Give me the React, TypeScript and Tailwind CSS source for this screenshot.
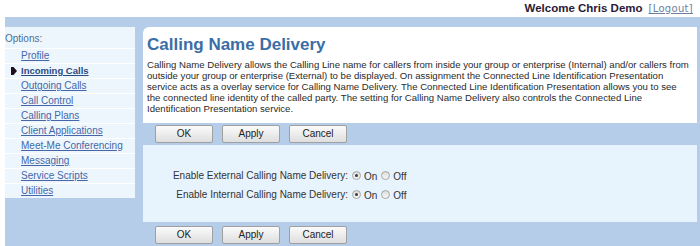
import React from 'react';

const navItems = [
  'Profile',
  'Incoming Calls',
  'Outgoing Calls',
  'Call Control',
  'Calling Plans',
  'Client Applications',
  'Meet-Me Conferencing',
  'Messaging',
  'Service Scripts',
  'Utilities',
];

function Radio({ checked }: { checked?: boolean }) {
  return (
    <span className="inline-flex items-center justify-center w-[9px] h-[9px] rounded-full border border-[#a4a4a4] bg-gradient-to-b from-[#dcdcdc] to-[#f8f8f8]">
      {checked && <span className="w-[3px] h-[3px] rounded-full bg-[#3a3a3a]" />}
    </span>
  );
}

function ButtonBar({ top }: { top: boolean }) {
  return (
    <div
      className={`flex gap-[9px] pl-[12px] bg-[#b6cde9] ${
        top ? 'h-[22px] pt-[2px]' : 'h-[24px] pt-[4px]'
      }`}
    >
      {['OK', 'Apply', 'Cancel'].map((label) => (
        <button
          key={label}
          className="w-[58px] h-[18px] border border-[#a0a0a0] rounded-[2px] bg-gradient-to-b from-[#fbfbfb] to-[#dedede] text-[10px] leading-[16px] text-[#222]"
        >
          {label}
        </button>
      ))}
    </div>
  );
}

function OptionRow({ label }: { label: string }) {
  return (
    <div className="flex items-center h-[19px]">
      <div className="w-[207px] text-right text-[10px] text-[#333] pr-[2px]">{label}</div>
      <div className="flex items-center gap-[3px] text-[10px] text-[#333] pl-[2px]">
        <Radio checked />
        <span className="mr-[1px] mt-[2px]">On</span>
        <Radio />
        <span className="mt-[2px]">Off</span>
      </div>
    </div>
  );
}

export default function App() {
  return (
    <div className="w-[700px] h-[246px] bg-white overflow-hidden font-['Liberation_Sans',Arial,sans-serif]">
      <div className="h-[17px] flex justify-end items-start pr-[7px] pt-[1px]">
        <span className="text-[11.5px] font-bold leading-[14px] text-[#2a1a38]">Welcome Chris Demo</span>
        <a className="ml-[6px] mt-[2px] text-[10px] leading-[12px] text-[#6b7f9f] underline tracking-[0.3px] font-['DejaVu_Sans',sans-serif]">
          [Logout]
        </a>
      </div>

      <div className="flex h-[229px] ml-[5px] pt-[10px] bg-[#b6cde9]">
        <nav className="w-[130px] self-start bg-[#eef6fd]">
          <div className="h-[21px] pt-[6px] text-[10px] leading-[12px] text-[#4a6d96]">Options:</div>
          {navItems.map((item) => {
            const active = item === 'Incoming Calls';
            return (
              <div key={item} className="h-[15px] border-t border-white flex items-center">
                <span className="w-[16px] flex justify-center pl-[1px]">
                  {active && (
                    <svg width="6" height="8" viewBox="0 0 6 8">
                      <path d="M0 0H2.5L6 4L2.5 8H0Z" fill="#1c0d1f" />
                    </svg>
                  )}
                </span>
                <a
                  className={`underline leading-[12px] ${
                    active ? 'text-[9.5px] font-bold text-[#2b4a80]' : 'text-[10px] text-[#4566a8]'
                  }`}
                >
                  {item}
                </a>
              </div>
            );
          })}
        </nav>

        <main className="flex-1 ml-[8px] mr-[3px] bg-white rounded-tl-[6px] flex flex-col">
          <h1 className="px-[4px] pt-[7px] text-[17px] font-bold leading-[22px] text-[#3b6ea6]">
            Calling Name Delivery
          </h1>
          <p className="pl-[4px] pr-[7px] mt-[3px] text-[9.6px] leading-[11px] text-[#2a2a2a]">
            Calling Name Delivery allows the Calling Line name for callers from inside your group or enterprise (Internal) and/or callers from outside your group or enterprise (External) to be displayed. On assignment the Connected Line Identification Presentation service acts as a overlay service for Calling Name Delivery. The Connected Line Identification Presentation allows you to see the connected line identity of the called party. The setting for Calling Name Delivery also controls the Connected Line Identification Presentation service.
          </p>
          <div className="mt-[9px]">
            <ButtonBar top />
          </div>
          <div className="h-[77px] bg-[#e8f4fd] pt-[21px]">
            <OptionRow label="Enable External Calling Name Delivery:" />
            <OptionRow label="Enable Internal Calling Name Delivery:" />
          </div>
          <ButtonBar top={false} />
        </main>
      </div>
    </div>
  );
}
